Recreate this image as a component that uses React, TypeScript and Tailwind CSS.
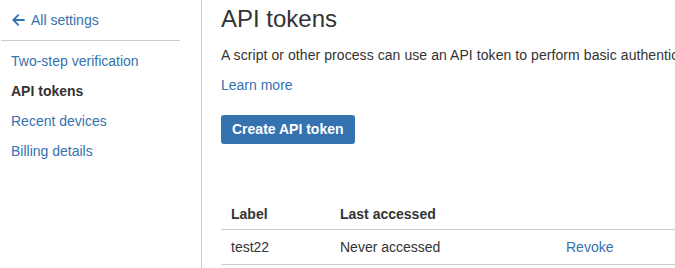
import React from 'react';

const navItems = [
  { label: 'Two-step verification', active: false },
  { label: 'API tokens', active: true },
  { label: 'Recent devices', active: false },
  { label: 'Billing details', active: false },
];

const App: React.FC = () => {
  return (
    <div className="flex w-[675px] h-[268px] overflow-hidden bg-white text-[14px] leading-5 text-[#333333] font-['Liberation_Sans',Arial,sans-serif]">
      {/* Sidebar */}
      <aside className="w-[202px] shrink-0 border-r border-[#cccccc] pt-[10px]">
        <a href="#" className="flex items-center gap-[6px] pl-[12px] text-[#3572b0]">
          <svg width="13" height="12" viewBox="0 0 13 12" fill="none" stroke="currentColor" strokeWidth="1.8" strokeLinecap="round" strokeLinejoin="round">
            <path d="M12 6H1.5" />
            <path d="M6.2 1.2L1.4 6L6.2 10.8" />
          </svg>
          <span>All settings</span>
        </a>
        <div className="mt-[10px] mb-[5px] ml-[1px] w-[179px] border-t border-[#cccccc]" />
        <nav className="flex flex-col">
          {navItems.map((item) => (
            <a
              key={item.label}
              href="#"
              className={`py-[5px] pl-[11px] ${item.active ? 'font-bold text-[#333333]' : 'text-[#3572b0]'}`}
            >
              {item.label}
            </a>
          ))}
        </nav>
      </aside>

      {/* Main content */}
      <main className="shrink-0 w-[720px] pl-[19px]">
        <h1 className="mt-[5px] text-[24px] leading-[28px] font-normal text-[#333333]">API tokens</h1>
        <p className="mt-[12px] whitespace-nowrap tracking-[0.005em]">
          A script or other process can use an API token to perform basic authentication with Jira Cloud applications.
        </p>
        <a href="#" className="block mt-[10px] w-fit text-[#3572b0]">Learn more</a>
        <button className="mt-[20px] h-[29px] px-[11px] rounded-[3px] bg-[#3572b0] text-white font-bold leading-[29px]">
          Create API token
        </button>

        <table className="mt-[53px] w-full border-collapse text-left">
          <thead>
            <tr className="border-b border-[#cccccc]">
              <th className="w-[109px] px-[10px] pt-[7px] pb-[5px] font-bold">Label</th>
              <th className="w-[226px] px-[10px] pt-[7px] pb-[5px] font-bold">Last accessed</th>
              <th className="px-[10px] pt-[7px] pb-[5px]"></th>
            </tr>
          </thead>
          <tbody>
            <tr className="border-b border-[#cccccc]">
              <td className="px-[10px] py-[7px]">test22</td>
              <td className="px-[10px] py-[7px]">Never accessed</td>
              <td className="px-[10px] py-[7px]">
                <a href="#" className="text-[#3572b0]">Revoke</a>
              </td>
            </tr>
          </tbody>
        </table>
      </main>
    </div>
  );
};

export default App;
